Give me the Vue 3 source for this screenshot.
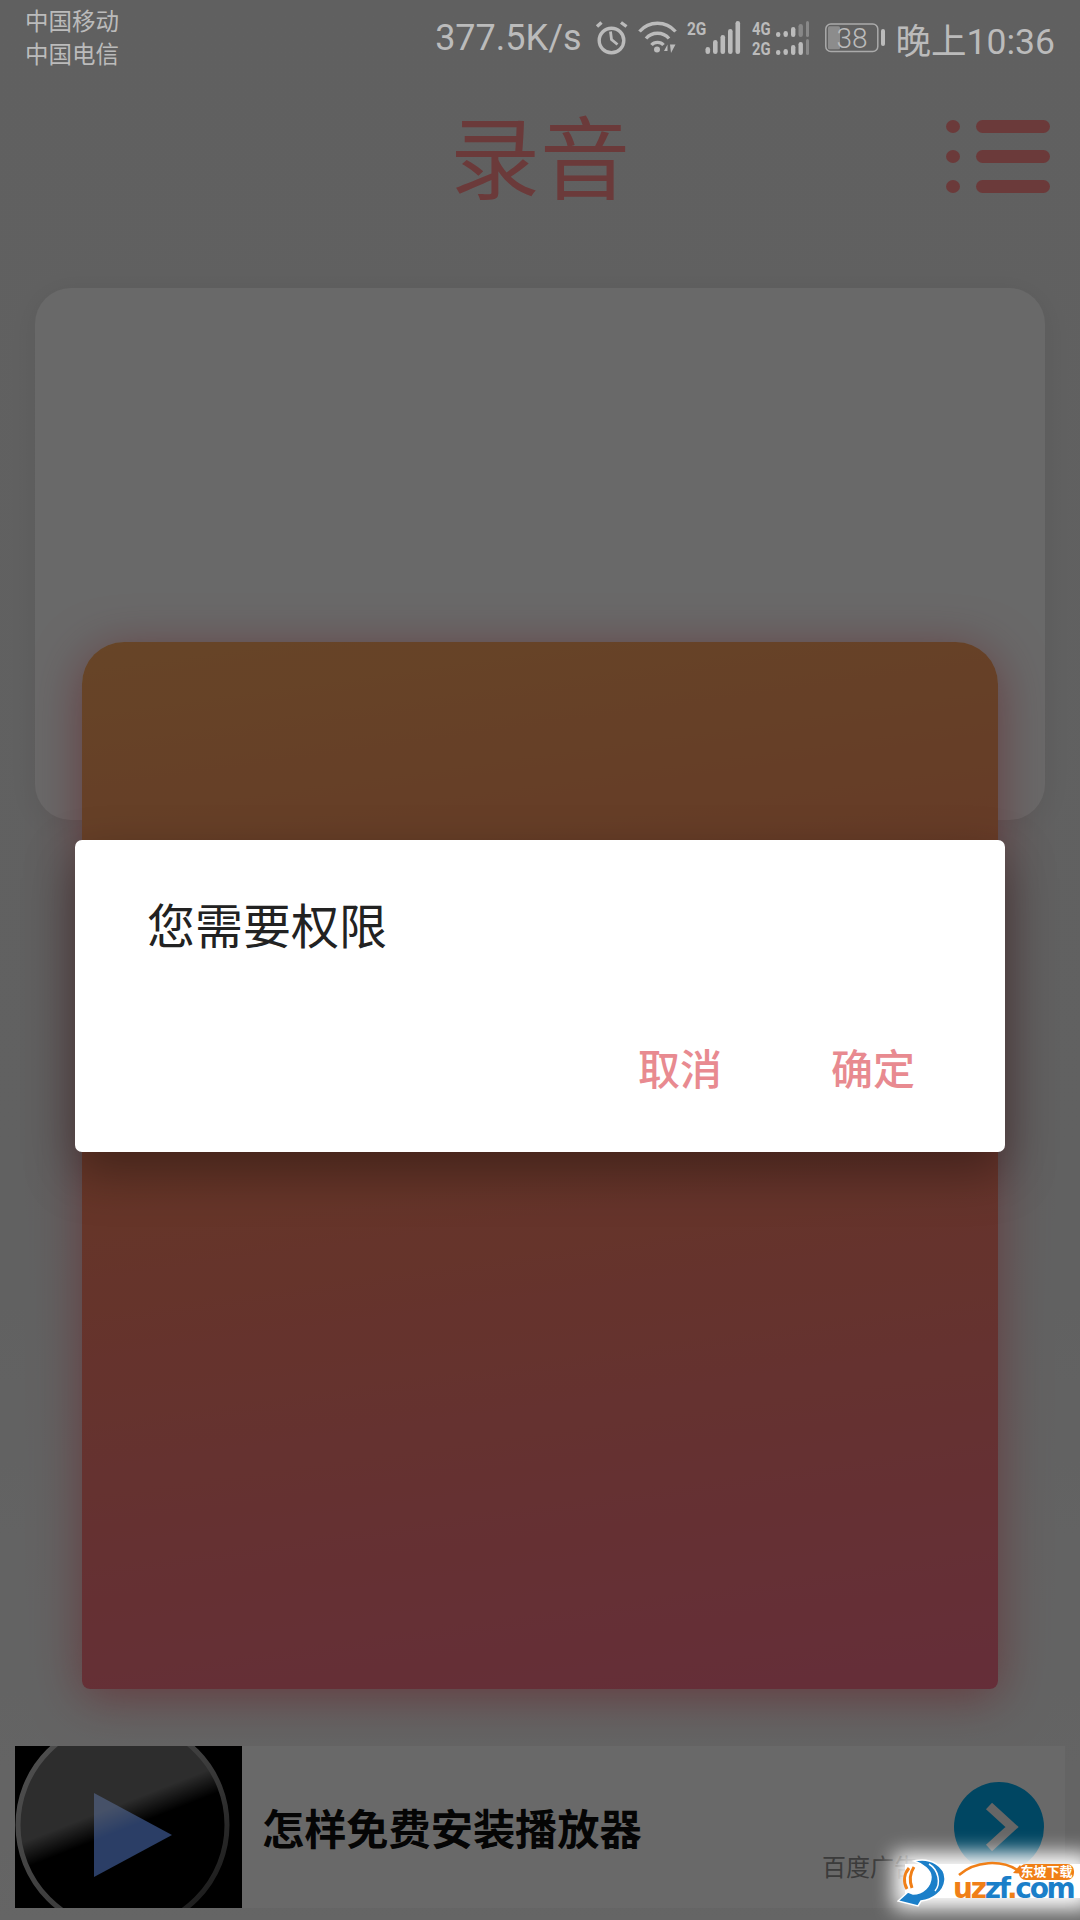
<template>
  <div class="page">
    <!-- 状态栏 -->
    <div class="status-bar">
      <div class="carriers">
        <div>中国移动</div>
        <div>中国电信</div>
      </div>
      <div class="status-right">
        <span class="speed">377.5K/s</span>
        <svg class="alarm" width="32" height="34" viewBox="0 0 32 34" fill="none" stroke="#bbb">
          <circle cx="15.5" cy="19.5" r="12.3" stroke-width="3.4" />
          <path d="M14.5 10.5 15.5 18.5 21.5 23.5" stroke-width="2.8" />
          <path d="M1 5.5 5.5 1.5M25 1.5 30.5 5.5" stroke-width="3.4" />
        </svg>
        <svg class="wifi" width="39" height="33" viewBox="0 0 39 33" fill="none" stroke="#bbb" stroke-width="3.4">
          <path d="M1.5 10.5C11 -.5 28 -.5 37.5 10.5" />
          <path d="M8 17.5C14 10.5 25 10.5 31 17.5" />
          <path d="M13.5 24C16.5 20.5 22.5 20.5 25.5 24" />
          <circle cx="19" cy="28.5" r="3" fill="#bbb" stroke="none" />
          <path d="M26 30 29.5 23.5V30ZM32 23.5 37.5 23.5 33 32Z" fill="#bbb" stroke="none" />
        </svg>
        <svg class="sim-one" width="54" height="35" viewBox="0 0 54 35" fill="#bbb">
          <text transform="translate(0 15) scale(.86 1)" class="net">2G</text>
          <rect x="18.5" y="27" width="4.6" height="7" rx="2.3" />
          <rect x="26" y="20" width="4.6" height="14" rx="2.3" />
          <rect x="33.5" y="15" width="4.6" height="19" rx="2.3" />
          <rect x="41" y="9" width="4.6" height="25" rx="2.3" />
          <rect x="48.5" y="1" width="4.6" height="33" rx="2.3" />
        </svg>
        <svg class="sim-two" width="57" height="37" viewBox="0 0 57 37" fill="#bbb">
          <text transform="translate(0 15) scale(.82 1)" class="net">4G</text>
          <text transform="translate(0 35) scale(.82 1)" class="net">2G</text>
          <rect x="24" y="12" width="4.4" height="5" rx="2.2" />
          <rect x="31.5" y="11" width="4.4" height="6" rx="2.2" />
          <rect x="39" y="7" width="4.4" height="10" rx="2.2" />
          <rect x="46.5" y="4" width="4.4" height="13" rx="2.2" fill="#888" />
          <rect x="54" y="1" width="3" height="16" rx="1.5" fill="#888" />
          <rect x="24" y="30" width="4.4" height="5" rx="2.2" />
          <rect x="31.5" y="29" width="4.4" height="6" rx="2.2" />
          <rect x="39" y="25" width="4.4" height="10" rx="2.2" />
          <rect x="46.5" y="22" width="4.4" height="13" rx="2.2" />
          <rect x="54" y="19" width="3" height="16" rx="1.5" fill="#888" />
        </svg>
        <svg class="battery" width="60" height="30" viewBox="0 0 60 30">
          <rect x=".8" y="1" width="52" height="27.5" rx="5" fill="none" stroke="#aaa" stroke-width="1.5" />
          <rect x="3" y="3.2" width="12" height="23" rx="1.5" fill="#8c8c8c" />
          <rect x="56" y="6" width="4" height="17" rx="2" fill="#bbb" />
          <text x="27" y="24.5" text-anchor="middle" class="level">38</text>
        </svg>
        <span class="clock">晚上10:36</span>
      </div>
    </div>

    <!-- 标题 -->
    <header class="top-bar">
      <span></span>
      <h1>录音</h1>
      <div class="menu-icon">
        <div class="menu-row" v-for="n in 3" :key="n">
          <i class="menu-dot"></i>
          <i class="menu-line"></i>
        </div>
      </div>
    </header>

    <div class="panel"></div>
    <div class="record-card"></div>

    <!-- 广告 -->
    <div class="ad">
      <svg class="ad-thumb" width="227" height="162" viewBox="0 0 227 162">
        <defs>
          <clipPath id="disc">
            <circle cx="107.5" cy="79" r="106" />
          </clipPath>
          <linearGradient id="gloss" gradientUnits="userSpaceOnUse" x1="100" y1="87" x2="91" y2="64">
            <stop offset="0" stop-color="#fff" stop-opacity="0" />
            <stop offset="1" stop-color="#fff" stop-opacity=".42" />
          </linearGradient>
          <linearGradient id="ring" x1="0" y1="0" x2="1" y2="1">
            <stop offset="0" stop-color="#c4c4c4" />
            <stop offset=".55" stop-color="#909090" />
            <stop offset="1" stop-color="#2a2a2a" />
          </linearGradient>
        </defs>
        <rect width="227" height="162" fill="#000" />
        <polygon points="79,47 157,89 79,131" fill="#6694f3" />
        <rect width="227" height="162" fill="url(#gloss)" clip-path="url(#disc)" />
        <circle cx="107.5" cy="79" r="104.5" fill="none" stroke="url(#ring)" stroke-width="5" />
      </svg>
      <span class="ad-title">怎样免费安装播放器</span>
      <svg class="ad-go" width="90" height="90" viewBox="0 0 90 90">
        <circle cx="45" cy="45" r="45" fill="#00a7e9" />
        <path d="M35 24 58 45 35 66" fill="none" stroke="#f2f2f2" stroke-width="9" />
      </svg>
      <span class="ad-label">百度广告</span>
    </div>

    <!-- 弹窗 -->
    <div class="mask">
      <div class="dialog">
        <div class="dialog-title">您需要权限</div>
        <div class="dialog-actions">
          <span>取消</span>
          <span>确定</span>
        </div>
      </div>
    </div>

    <!-- 水印 -->
    <div class="watermark">
      <svg class="wm-logo" width="56" height="54" viewBox="7 4 56 54">
        <path d="M24 11C40 7 56 16 55 30 54 42 42 50 31 51L28 56 8 51 18 42 23 44C33 44 41 36 41 27 41 20 33 14 24 11Z" fill="#1b7fc9" stroke="#fff" stroke-width="1.5" />
        <path d="M39 14C49 20 51 34 45 41" fill="none" stroke="#fff" stroke-width="1.5" />
        <path d="M19 18C14 24 13 32 17 39M24 17C20 23 19 30 22 38" fill="none" stroke="#f07f17" stroke-width="3" />
      </svg>
      <div class="wm-right">
        <svg class="wm-arc" width="74" height="16" viewBox="0 0 74 16" fill="none">
          <path d="M2 14C18 0 44 -2 62 10" stroke="#f07f17" stroke-width="2.5" />
          <path d="M56 12 68 13 63 4Z" fill="#f07f17" />
        </svg>
        <div class="wm-badge">东坡下载</div>
        <div class="wm-name"><span class="orange">uz</span>zf<span class="orange">.</span>com</div>
      </div>
    </div>
  </div>
</template>

<script setup>
</script>

<style scoped>
.page {
  position: relative;
  width: 1080px;
  height: 1920px;
  overflow: hidden;
  background: linear-gradient(180deg, #e5e5e5 0%, #e6e6e6 60%, #f0f0f0 100%);
  font-family: Roboto, "Noto Sans CJK SC", sans-serif;
}

.status-bar {
  position: relative;
  z-index: 3;
  display: flex;
  justify-content: space-between;
  height: 76px;
  padding: 6px 25px 0;
  box-sizing: border-box;
  color: #bbb;
}

.carriers {
  font-size: 23.5px;
  line-height: 32.5px;
}

.status-right {
  display: flex;
  align-items: center;
  height: 64px;
}

.status-right svg {
  overflow: visible;
}

.speed {
  font-size: 36px;
  white-space: nowrap;
}

.clock {
  font-size: 35.5px;
  white-space: nowrap;
  margin-left: 11px;
}

.alarm { margin-left: 14px; }
.wifi { margin-left: 10px; margin-top: -1px; }
.sim-one { margin-left: 10px; margin-top: -1px; }
.sim-two { margin-left: 11px; }
.battery { margin-left: 16px; }

.net {
  font-size: 18px;
  font-weight: 700;
  font-family: Roboto, sans-serif;
}

.level {
  font-size: 28px;
  fill: #bbb;
  font-family: Roboto, sans-serif;
  font-weight: 300;
}

.top-bar {
  display: grid;
  grid-template-columns: 1fr auto 1fr;
  align-items: center;
  height: 168px;
}

.top-bar h1 {
  margin: 4px 0 0;
  font-size: 90px;
  font-weight: 400;
  line-height: 100px;
  color: #ff8a8a;
}

.menu-icon {
  justify-self: end;
  display: flex;
  flex-direction: column;
  gap: 17px;
  margin: -8px 30px 0 0;
}

.menu-row {
  display: flex;
  align-items: center;
  gap: 16px;
}

.menu-dot {
  width: 14px;
  height: 13px;
  border-radius: 50%;
  background: #ff8a8a;
}

.menu-line {
  width: 74px;
  height: 13px;
  border-radius: 7px;
  background: #ff8a8a;
}

.panel {
  height: 532px;
  margin: 44px 35px 0;
  border-radius: 36px;
  background: #f9f9f9;
  box-shadow: 0 4px 30px rgba(0, 0, 0, 0.06);
}

.record-card {
  position: relative;
  height: 1047px;
  margin: -178px 82px 0;
  border-radius: 42px 42px 8px 8px;
  background: linear-gradient(172deg, #f5a45d 0%, #f2805f 45%, #f06e88 100%);
  box-shadow: 0 8px 48px rgba(240, 110, 120, 0.75);
}

.ad {
  position: relative;
  display: flex;
  align-items: center;
  height: 162px;
  margin: 57px 15px 0;
  background: #fafafa;
}

.ad-thumb {
  flex: none;
}

.ad-title {
  flex: 1;
  margin: -2px 0 0 20px;
  font-size: 42.2px;
  font-weight: 700;
  color: #0c0c0c;
}

.ad-go {
  margin-right: 21px;
}

.ad-label {
  position: absolute;
  right: 147px;
  bottom: 25px;
  font-size: 24px;
  color: #8c8c8c;
}

.mask {
  position: absolute;
  inset: 0;
  z-index: 2;
  display: flex;
  justify-content: center;
  padding-top: 840px;
  box-sizing: border-box;
  background: rgba(0, 0, 0, 0.58);
}

.dialog {
  display: flex;
  flex-direction: column;
  justify-content: space-between;
  width: 930px;
  height: 312px;
  padding: 58px 90px 57px 72px;
  box-sizing: border-box;
  border-radius: 7px;
  background: #fff;
  box-shadow: 0 20px 50px rgba(0, 0, 0, 0.35);
}

.dialog-title {
  font-size: 48px;
  line-height: 60px;
  color: #222;
}

.dialog-actions {
  display: flex;
  justify-content: flex-end;
  gap: 109px;
  font-size: 42px;
  line-height: 48px;
  font-weight: 500;
  color: #e88a90;
}

.watermark {
  position: absolute;
  z-index: 3;
  right: 0;
  bottom: 14px;
  display: flex;
  align-items: flex-end;
  width: 183px;
  height: 50px;
}

.watermark::before {
  content: "";
  position: absolute;
  inset: 8px 0 8px 8px;
  background: #fff;
  box-shadow: 0 0 20px 11px #fff;
}

.wm-logo {
  position: relative;
  flex: none;
  margin-bottom: -2px;
}

.wm-right {
  position: relative;
  flex: 1;
  height: 100%;
}

.wm-arc {
  position: absolute;
  left: 4px;
  top: 5px;
}

.wm-badge {
  position: absolute;
  right: 6px;
  top: 8px;
  width: 55px;
  height: 16px;
  border-radius: 7px;
  background: #f07f17;
  color: #fff;
  font-size: 13px;
  font-weight: 700;
  line-height: 16px;
  text-align: center;
  white-space: nowrap;
}

.wm-name {
  position: absolute;
  left: 0;
  bottom: 3px;
  font-family: "DejaVu Sans", sans-serif;
  font-size: 28px;
  font-weight: 700;
  letter-spacing: -2.3px;
  line-height: 28px;
  color: #1b7fc9;
  white-space: nowrap;
}

.orange {
  color: #f07f17;
}
</style>
